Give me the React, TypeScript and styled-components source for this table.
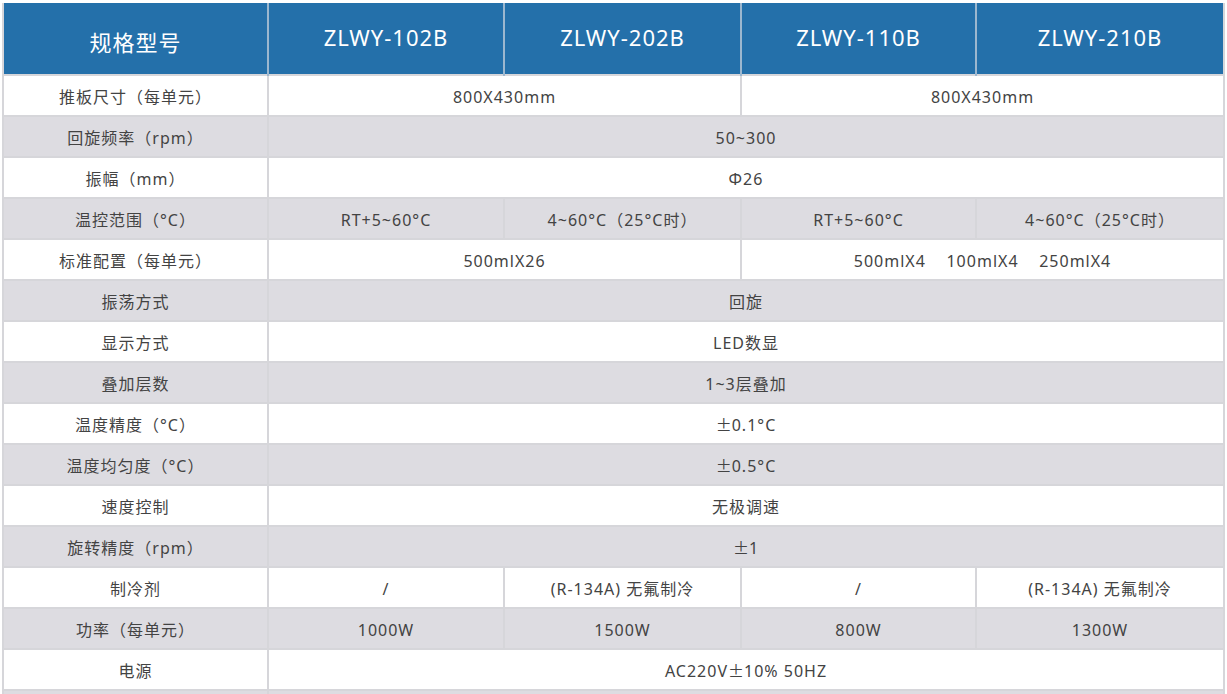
import React from 'react';
import styled, { createGlobalStyle } from 'styled-components';

interface Cell {
  text: string;
  span?: number;
}

interface SpecRow {
  label: string;
  cells: Cell[];
}

const models = ['ZLWY-102B', 'ZLWY-202B', 'ZLWY-110B', 'ZLWY-210B'];
const colWidths = [265, 236, 237, 235, 248];

const rows: SpecRow[] = [
  {
    label: '推板尺寸（每单元）',
    cells: [
      { text: '800X430mm', span: 2 },
      { text: '800X430mm', span: 2 }
    ]
  },
  { label: '回旋频率（rpm）', cells: [{ text: '50~300', span: 4 }] },
  { label: '振幅（mm）', cells: [{ text: 'Φ26', span: 4 }] },
  {
    label: '温控范围（°C）',
    cells: [
      { text: 'RT+5~60°C' },
      { text: '4~60°C（25°C时）' },
      { text: 'RT+5~60°C' },
      { text: '4~60°C（25°C时）' }
    ]
  },
  {
    label: '标准配置（每单元）',
    cells: [
      { text: '500mlX26', span: 2 },
      { text: '500mlX4    100mlX4    250mlX4', span: 2 }
    ]
  },
  { label: '振荡方式', cells: [{ text: '回旋', span: 4 }] },
  { label: '显示方式', cells: [{ text: 'LED数显', span: 4 }] },
  { label: '叠加层数', cells: [{ text: '1~3层叠加', span: 4 }] },
  { label: '温度精度（°C）', cells: [{ text: '±0.1°C', span: 4 }] },
  { label: '温度均匀度（°C）', cells: [{ text: '±0.5°C', span: 4 }] },
  { label: '速度控制', cells: [{ text: '无极调速', span: 4 }] },
  { label: '旋转精度（rpm）', cells: [{ text: '±1', span: 4 }] },
  {
    label: '制冷剂',
    cells: [
      { text: '/' },
      { text: '(R-134A) 无氟制冷' },
      { text: '/' },
      { text: '(R-134A) 无氟制冷' }
    ]
  },
  {
    label: '功率（每单元）',
    cells: [
      { text: '1000W' },
      { text: '1500W' },
      { text: '800W' },
      { text: '1300W' }
    ]
  },
  { label: '电源', cells: [{ text: 'AC220V±10% 50HZ', span: 4 }] },
  { label: '', cells: [{ text: '', span: 4 }] }
];

const GlobalStyle = createGlobalStyle`
  html, body {
    margin: 0;
    padding: 0;
    background: #fff;
    overflow: hidden;
  }
  body {
    font-family: "Noto Sans", "Noto Sans CJK SC", sans-serif;
  }
`;

const Page = styled.div`
  padding: 3px 2px 0 2px;
  width: 1227px;
  height: 694px;
  box-sizing: border-box;
  overflow: hidden;
`;

const Table = styled.table`
  width: 1223px;
  border-collapse: collapse;
  table-layout: fixed;
  border-left: 2px solid #d6d6da;
  border-right: 2px solid #d6d6da;
`;

const Col = styled.col<{ $w: number }>`
  width: ${p => p.$w}px;
`;

const HeadCell = styled.th<{ $first?: boolean }>`
  height: ${p => (p.$first ? 67 : 67)}px;
  padding: ${p => (p.$first ? '4px 0 0' : '0 0 4px')};
  background: #2470aa;
  color: #fff;
  font-size: 22px;
  font-weight: 400;
  letter-spacing: 1px;
  text-align: center;
  border-left: 2px solid #9cb7cf;
  &:first-child {
    border-left: none;
  }
`;

const Row = styled.tr<{ $shaded: boolean }>`
  background: ${p => (p.$shaded ? '#dddce1' : '#fff')};
`;

const BodyCell = styled.td`
  height: 37px;
  padding: 2px 0 0;
  border: 2px solid #d6d6da;
  color: #434343;
  font-size: 16px;
  letter-spacing: 1px;
  text-align: center;
  white-space: pre;
  line-height: 1;
`;

// the ± sign is set full width, as the CJK face draws it
const Wide = styled.span`
  font-family: "Noto Sans CJK SC", sans-serif;
  letter-spacing: 0;
`;

const renderText = (text: string) =>
  text.split(/(±)/).map((part, i) =>
    part === '±' ? <Wide key={i}>{part}</Wide> : part
  );

const App = () => (
  <Page>
    <GlobalStyle />
    <Table>
      <colgroup>
        {colWidths.map((w, i) => (
          <Col key={i} $w={w} />
        ))}
      </colgroup>
      <thead>
        <tr>
          <HeadCell $first>规格型号</HeadCell>
          {models.map(model => (
            <HeadCell key={model}>{model}</HeadCell>
          ))}
        </tr>
      </thead>
      <tbody>
        {rows.map((row, i) => (
          <Row key={i} $shaded={i % 2 === 1}>
            <BodyCell>{row.label}</BodyCell>
            {row.cells.map((cell, j) => (
              <BodyCell key={j} colSpan={cell.span || 1}>
                {renderText(cell.text)}
              </BodyCell>
            ))}
          </Row>
        ))}
      </tbody>
    </Table>
  </Page>
);

export default App;
